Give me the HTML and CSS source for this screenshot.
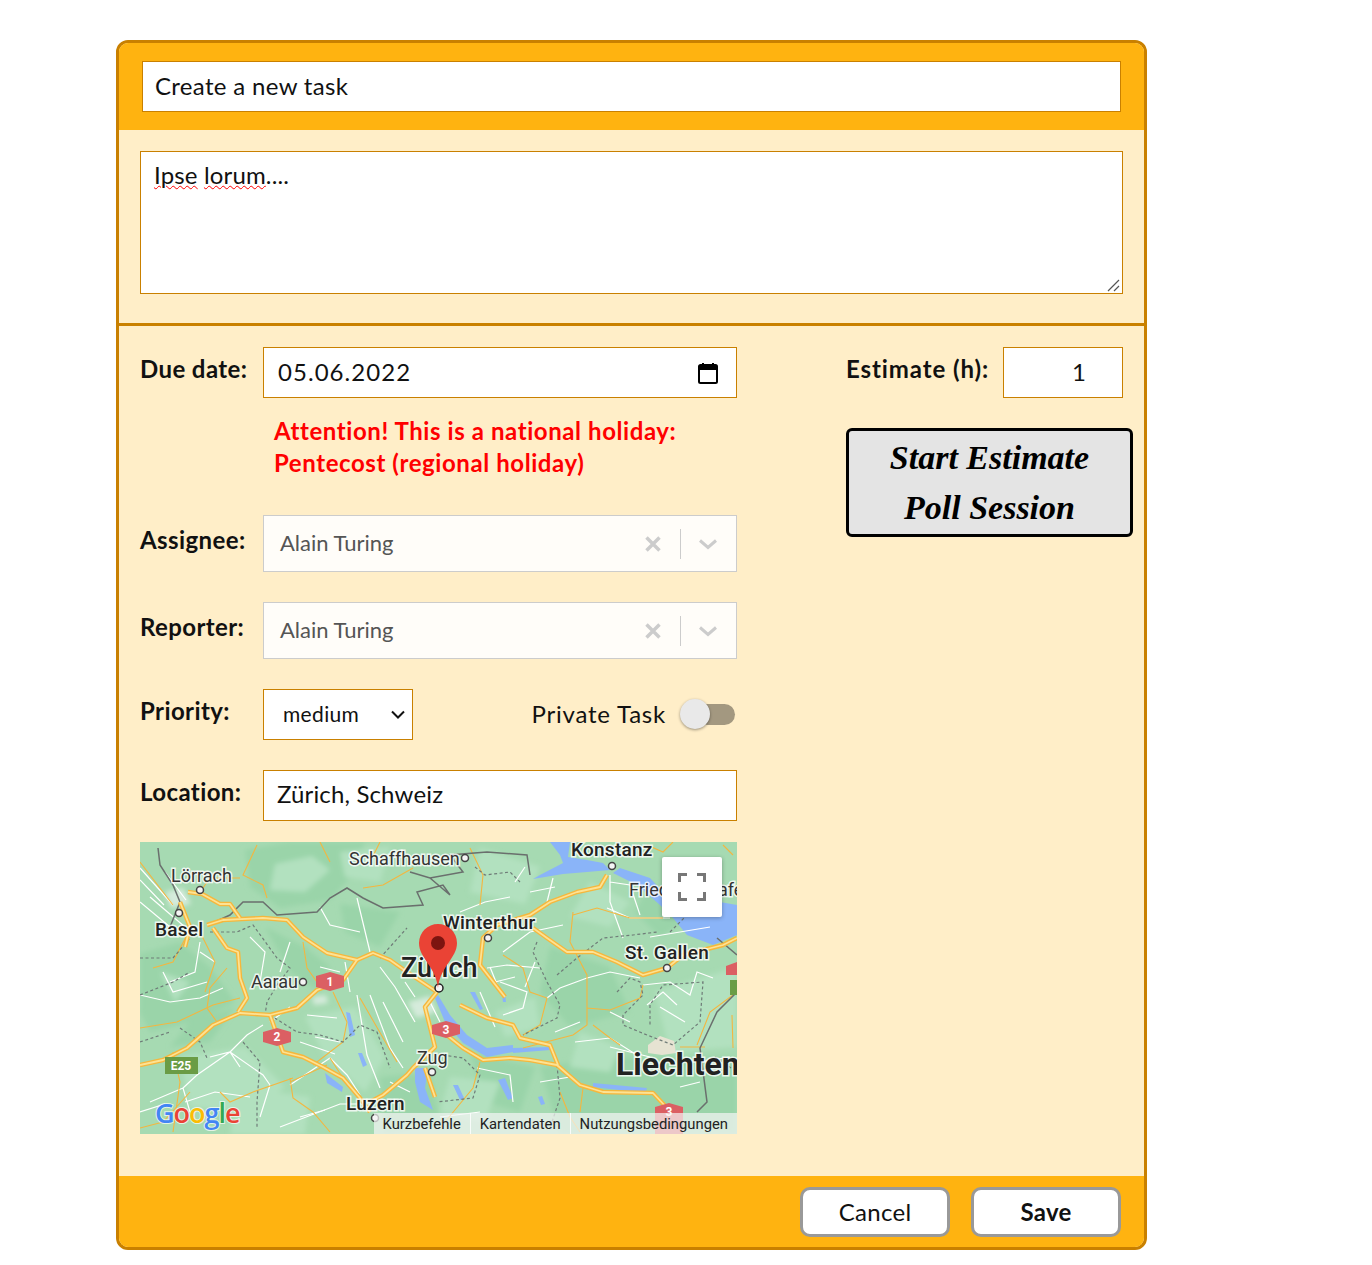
FILE: index.html
```html
<!DOCTYPE html>
<html lang="en">
<head>
    <meta charset="UTF-8">
    <title>Create a new task</title>
    <meta name="viewport" content="width=device-width, initial-scale=1.0">
    <link rel="stylesheet" href="styles.css">
</head>
<body>

    <form class="task-card">
        <header class="task-header">
            <input class="title-input" type="text" value="Create a new task">
        </header>

        <div class="description-section">
            <div class="description-box">
                <span class="misspelled">Ipse</span> <span class="misspelled">lorum</span>....
                <svg class="resize-handle" width="13" height="13" viewBox="0 0 13 13"><path d="M1 12L12 1M7 12l5-5" stroke="#555" stroke-width="1.200"/></svg>
            </div>
        </div>

        <div class="details-section">
            <div class="left-column">
                <div class="form-row">
                    <label class="field-label">Due date:</label>
                    <div class="text-box date-box">
                        <span class="date-value">05.06.2022</span>
                        <svg class="calendar-icon" width="20" height="22" viewBox="0 0 20 22">
                            <path d="M4 1h2v3H4zM14 1h2v3h-2z" fill="#000"/>
                            <path d="M2.500 3h15A1.500 1.500 0 0 1 19 4.500v15a1.500 1.500 0 0 1-1.500 1.500h-15A1.500 1.500 0 0 1 1 19.500v-15A1.500 1.500 0 0 1 2.500 3z" fill="none" stroke="#000" stroke-width="2"/>
                            <path d="M1 3h18v5H1z" fill="#000"/>
                        </svg>
                    </div>
                </div>

                <div class="holiday-alert">Attention! This is a national holiday:<br>Pentecost (regional holiday)</div>

                <div class="form-row person-row">
                    <label class="field-label">Assignee:</label>
                    <div class="person-select">
                        <span class="person-name">Alain Turing</span>
                        <svg class="clear-icon" width="16" height="16" viewBox="0 0 16 16"><path d="M1.500 1.500l13 13M14.500 1.500l-13 13" stroke="#ccc" stroke-width="3.500"/></svg>
                        <span class="select-divider"></span>
                        <svg class="chevron-icon" width="20" height="12" viewBox="0 0 20 12"><path d="M2 2.500l8 7 8-7" fill="none" stroke="#ccc" stroke-width="3"/></svg>
                    </div>
                </div>

                <div class="form-row person-row">
                    <label class="field-label">Reporter:</label>
                    <div class="person-select">
                        <span class="person-name">Alain Turing</span>
                        <svg class="clear-icon" width="16" height="16" viewBox="0 0 16 16"><path d="M1.500 1.500l13 13M14.500 1.500l-13 13" stroke="#ccc" stroke-width="3.500"/></svg>
                        <span class="select-divider"></span>
                        <svg class="chevron-icon" width="20" height="12" viewBox="0 0 20 12"><path d="M2 2.500l8 7 8-7" fill="none" stroke="#ccc" stroke-width="3"/></svg>
                    </div>
                </div>

                <div class="form-row">
                    <label class="field-label">Priority:</label>
                    <select class="priority-select">
                        <option>medium</option>
                        <option>low</option>
                        <option>high</option>
                    </select>
                    <div class="private-toggle">
                        <span class="private-label">Private Task</span>
                        <span class="toggle-track"><span class="toggle-thumb"></span></span>
                    </div>
                </div>

                <div class="form-row location-row">
                    <label class="field-label">Location:</label>
                    <input class="text-box location-input" type="text" value="Zürich, Schweiz">
                </div>

                <div class="map-box">
                    <svg class="map-canvas" width="597" height="292" viewBox="0 0 597 292">
                        <defs>
                            <filter id="soft"><feGaussianBlur stdDeviation="2.500"/></filter>
                        </defs>
                        <rect width="597" height="292" fill="#a6dab2"/>

                        <!-- terrain patches -->
                        <g filter="url(#soft)">
                            <g fill="#9ad4a9">
                                <path d="M105 8L150 0 225 0 215 30 190 58 140 66 110 45z"/>
                                <path d="M0 112L40 100 70 125 95 160 60 178 10 190 0 170z"/>
                                <path d="M125 85L165 105 190 125 180 150 150 130z"/>
                                <path d="M50 180L95 165 70 200 30 205z"/>
                                <path d="M410 105L470 125 490 170 430 185 400 150z"/>
                                <path d="M240 235L290 230 300 280 245 292z"/>
                                <path d="M400 225L470 215 597 215 597 292 420 292z"/>
                                <path d="M330 210L395 225 380 270 345 260z"/>
                                <path d="M200 62L260 70 240 105 205 90z"/>
                                <path d="M510 40L560 70 520 95 495 70z"/>
                            </g>
                            <g fill="#b2e1bf">
                                <path d="M135 22L172 14 190 28 165 50 130 48z"/>
                                <path d="M200 10L250 5 240 40 205 35z"/>
                                <path d="M40 215L105 205 145 245 110 270 50 265z"/>
                                <path d="M165 175L215 165 245 215 225 250 185 215z"/>
                                <path d="M515 150L597 125 597 205 530 210z"/>
                                <path d="M340 6L400 25 385 62 330 50z"/>
                                <path d="M355 170L395 155 400 185 365 195z"/>
                                <path d="M310 235L360 240 345 280 300 270z"/>
                                <path d="M440 190L480 205 470 230 430 225z"/>
                                <path d="M20 130L50 140 35 160z"/>
                                <path d="M100 245L170 255 165 292 90 292z"/>
                                <path d="M450 40L490 60 470 85 430 75z"/>
                            </g>
                        </g>
                        <path d="M508 203l12-9 14 5 2 12-14 2-14-2z" fill="#e6e3d2"/>
                        <g fill="#d5ebdb" filter="url(#soft)">
                            <path d="M25 50l18-4 8 16-20 4zM268 160l22-6 6 16-20 6zM172 155l14-2 2 8-14 2z"/>
                        </g>

                        <!-- lakes -->
                        <g fill="#8ab4f8">
                            <path d="M410 0L430 0 428 15 447 18 463 21 470 28 447 30 423 32 393 37 400 33 423 21 420 13z"/>
                            <path d="M480 26L510 36 523 50 597 63 597 93 573 103 547 93 533 76 520 63 497 43 473 31z"/>
                            <path d="M298 153L310 173 327 193 347 206 373 203 373 210 347 215 323 201 305 180 295 156z"/>
                            <path d="M330 150L335 150 343 167 340 168z"/>
                            <path d="M362 152L365 152 366 160 363 160z"/>
                            <path d="M275 226L288 226 285 246 293 268 280 260 275 240z"/>
                            <path d="M185 231L203 245 202 250 187 241z"/>
                            <path d="M206 170L210 171 215 193 210 195z"/>
                            <path d="M218 211L222 211 227 223 223 225z"/>
                            <path d="M358 238L365 236 373 256 368 258z"/>
                            <path d="M398 255L402 254 405 262 401 263z"/>
                            <path d="M453 241L507 246 505 251 453 245z"/>
                            <path d="M313 243L318 243 324 256 320 258z"/>
                            <path d="M373 206L410 205 410 208 373 211z"/>
                        </g>

                        <!-- minor roads -->
                        <g fill="none" stroke="#fff" stroke-width="1.200">
                            <path d="M0 26L33 63M0 38L24 63M0 60L30 85M10 55L45 85M25 30L46 58M180 65L190 83 220 90M217 56L230 110M0 153L30 160 60 156 83 146M23 130L33 150 67 140"/>
                            <path d="M90 210L57 233 43 246M90 210L123 233 130 243M90 210L107 193 123 183M70 215L90 210 100 225M190 216L207 233 220 253M217 153L227 213 240 246M230 153L250 206 263 226M243 160L263 200M167 173L197 176M160 200L195 212M150 243L190 216M60 110L75 120M10 260L43 246 50 270M130 243L120 275M140 285L200 262 230 262"/>
                            <path d="M413 36L407 60M470 40L490 43 500 73M470 33L470 60 483 96M363 110L390 90 423 83M360 140L387 150 383 166 363 173M407 156L420 146 447 136 470 130 500 136M347 126L367 123 400 126M503 143L530 140 550 153 557 130 573 136M507 163L523 150 537 163M337 226L370 233 373 260M467 66L490 76 530 76M340 150L355 185M350 125L360 150M375 40L385 25M395 120L385 145M530 126L545 110M300 180L290 160M435 200L470 196 500 215M540 245L560 240M300 275L340 270"/>
                            <path d="M60 100L55 130 30 140M110 95L125 110 120 140M150 100L140 130M180 125L200 130M240 125L255 145 275 180M205 120L210 150M265 140L275 155M130 180L150 165M175 195L200 200M45 260L75 250 110 255M160 275L185 268M250 240L270 250M0 270L25 262M310 130L330 125M320 70L345 60 370 55M390 50L415 45M355 140L375 135M415 190L440 180M510 95L540 90 570 85M470 170L490 180M520 165L545 180M400 240L430 235M470 205L510 215M560 220L590 215"/>
                        </g>
                        <g fill="none" stroke="#f4b63f" stroke-width="1.100">
                            <path d="M117 3L103 33 123 43 127 56M223 46L243 43 273 26M0 20L33 63M100 36L70 36 60 50M163 100L167 126 177 140M193 150L207 180 203 200 173 223M220 156L257 220M150 236L153 256 173 270 190 290M150 240L187 223M77 180L67 166 70 146 87 126M47 93L33 120 13 126M0 186L37 180 73 163 100 156M33 210L40 240 33 290M80 250L90 260 113 250 153 236M0 286L23 280 50 250M60 90L75 120 65 150M203 236L190 216M180 0L190 20M240 0L230 20"/>
                            <path d="M330 6L343 33 340 63M433 70L430 100 447 133 447 183 433 193 383 206M447 166L470 168 500 156 503 143M453 183L470 196 480 203M363 113L383 126 390 150 407 156 400 183 383 193M433 73L457 66 490 76 523 76M557 203L570 170 597 150M592 173L593 206M340 220L333 246 300 286M443 246L440 270M583 3L593 13M507 3L523 10 533 0M420 250L430 275 440 290M540 205L565 205"/>
                        </g>

                        <!-- canton borders -->
                        <g fill="none" stroke="#6f7c78" stroke-width="1.200" stroke-dasharray="3 2.500">
                            <path d="M0 116L33 116 50 96M70 90L97 90 113 83 137 116 150 126 137 143 127 160 125 173M40 186L60 200 67 216M130 173L157 190 180 193 203 200 220 183 237 190 250 226M103 200L120 220 117 260 117 286M240 116L267 86M0 153L33 140 50 130M0 200L30 190"/>
                            <path d="M397 100L393 110 407 140 420 163 417 176 383 193M417 133L437 116 463 96 493 93 517 90M477 150L490 136 500 140 503 153 483 173 483 183 507 193 533 203 560 180 563 140 523 143 510 163 510 183M303 213L323 216 340 233 333 256 297 260M417 223L420 256 410 286M335 25L345 33 370 30 380 40M530 90L545 75M575 215L597 230"/>
                        </g>

                        <!-- country borders -->
                        <g fill="none" stroke="#6a6f6d" stroke-width="1.500">
                            <path d="M18 6L20 23 33 43 40 60 30 85M68 83L90 73 103 60 123 60 137 73 177 70 190 56 207 46 223 56 243 66 283 63 277 50 303 43 310 53M270 30L290 36 323 30 310 13 347 10 387 13 390 33M290 36L310 53M577 96L597 113M597 150L577 170 560 206 567 260 557 270"/>
                        </g>

                        <!-- motorways -->
                        <g fill="none" stroke-linejoin="round">
                            <g stroke="#f6b73c" stroke-width="4.500">
                                <path id="road-a" d="M67 83L83 78 123 76 147 78 163 95 187 111 217 118 233 111 250 118 267 130 297 150"/>
                                <path id="road-b" d="M0 223L23 218 47 206 73 183 100 171 130 173 157 166 177 148 203 138 217 118"/>
                                <path id="road-c" d="M73 86L87 106 98 110 100 136 107 156 98 170"/>
                                <path id="road-d" d="M130 173L143 210 163 215 183 225 203 236 220 256 230 270"/>
                                <path id="road-e" d="M297 150L285 165 295 205 273 226 267 233 243 253 230 260M285 226L295 255"/>
                                <path id="road-f" d="M467 33L460 45 437 50 410 60 390 73 357 83 343 96 340 123 365 155"/>
                                <path id="road-g" d="M393 86L407 96 427 110 453 110 477 120 503 133 527 126 543 113 583 103 597 96"/>
                                <path id="road-h" d="M303 190L323 206 343 218 370 216 390 218 417 223 440 243 463 250 513 251 527 266"/>
                                <path id="road-i" d="M320 163L347 176 373 183 380 196 410 203 418 223"/>
                                <path id="road-j" d="M48 50L62 52 80 62 90 62 100 76"/>
                                <path id="road-k" d="M40 60L50 85 45 105"/>
                            </g>
                            <g stroke="#fde293" stroke-width="1.800">
                                <use href="#road-a"/><use href="#road-b"/><use href="#road-c"/><use href="#road-d"/><use href="#road-e"/><use href="#road-f"/><use href="#road-g"/><use href="#road-h"/><use href="#road-i"/><use href="#road-j"/><use href="#road-k"/>
                            </g>
                        </g>

                        <!-- route shields -->
                        <g fill="#db5f63">
                            <path d="M176 134L190 130 204 134 204 145 190 149 176 145z"/>
                            <path d="M123 190L137 186 151 190 151 200 137 204 123 200z"/>
                            <path d="M292 183L306 179 320 183 320 192 306 196 292 192z"/>
                            <path d="M515 265L529 261 543 265 543 292 515 292z"/>
                            <path d="M597 120L586 124 586 133 597 133z"/>
                        </g>
                        <g fill="#6a9c45">
                            <rect x="25" y="215" width="33" height="17"/>
                            <rect x="590" y="138" width="7" height="15"/>
                        </g>
                        <text class="shield-label" x="190" y="144">1</text>
                        <text class="shield-label" x="137" y="199">2</text>
                        <text class="shield-label" x="306" y="192">3</text>
                        <text class="shield-label" x="529" y="274">3</text>
                        <text class="shield-label" x="41" y="228">E25</text>

                        <!-- place markers -->
                        <g fill="#f4f4f4" stroke="#444" stroke-width="1.500">
                            <circle cx="60" cy="48" r="3.500"/>
                            <circle cx="39" cy="71" r="3.500"/>
                            <circle cx="163" cy="140" r="3.500"/>
                            <circle cx="325" cy="16" r="3.500"/>
                            <circle cx="472" cy="24" r="3.500"/>
                            <circle cx="348" cy="96" r="3.500"/>
                            <circle cx="527" cy="126" r="3.500"/>
                            <circle cx="292" cy="230" r="3.500"/>
                            <circle cx="235" cy="276" r="3.500"/>
                            <circle cx="299" cy="146" r="4" stroke="#222"/>
                        </g>

                        <!-- place names -->
                        <text class="place-small" x="31" y="40">Lörrach</text>
                        <text class="place-medium" x="15" y="94">Basel</text>
                        <text class="place-small" x="111" y="146">Aarau</text>
                        <text class="place-small" x="209" y="23">Schaffhausen</text>
                        <text class="place-medium" x="431" y="14">Konstanz</text>
                        <text class="place-small" x="489" y="54">Friedrichshafen</text>
                        <text class="place-medium" x="303" y="87">Winterthur</text>
                        <text class="place-medium" x="485" y="117">St. Gallen</text>
                        <text class="place-small" x="277" y="222">Zug</text>
                        <text class="place-medium" x="206" y="268">Luzern</text>
                        <text class="place-large" x="261" y="135">Zürich</text>
                        <text class="place-country" x="476" y="233">Liechtenstein</text>

                        <!-- marker pin -->
                        <path d="M298 146C296 125 279 116 279 101A19 19 0 0 1 317 101C317 116 300 125 298 146z" fill="#ea4335"/>
                        <circle cx="298" cy="101" r="7" fill="#7d1410"/>

                        <!-- logo -->
                        <text class="google-logo" x="15" y="281"><tspan fill="#4285f4">G</tspan><tspan fill="#ea4335">o</tspan><tspan fill="#fbbc04">o</tspan><tspan fill="#4285f4">g</tspan><tspan fill="#34a853">l</tspan><tspan fill="#ea4335">e</tspan></text>
                    </svg>

                    <button class="map-fullscreen" type="button">
                        <svg width="30" height="30" viewBox="0 0 30 30"><path d="M2.500 10V2.500H10M20 2.500h7.500V10M27.500 20v7.500H20M10 27.500H2.500V20" fill="none" stroke="#777" stroke-width="3"/></svg>
                    </button>

                    <div class="map-attribution">
                        <span>Kurzbefehle</span>
                        <span>Kartendaten</span>
                        <span>Nutzungsbedingungen</span>
                    </div>
                </div>
            </div>

            <div class="right-column">
                <div class="estimate-row">
                    <label class="field-label">Estimate (h):</label>
                    <input class="text-box estimate-input" type="text" value="1">
                </div>
                <button class="poll-button" type="button">Start Estimate<br>Poll Session</button>
            </div>
        </div>

        <footer class="task-footer">
            <button class="footer-button" type="button">Cancel</button>
            <button class="footer-button save-button" type="submit">Save</button>
        </footer>
    </form>

</body>
</html>
```

FILE: styles.css
```css
* {
    box-sizing: border-box;
}

body {
    font-family: 'Lato', sans-serif;
    margin: 0;
    padding: 40px 0 15px 116px;
    background-color: white;
    color: #111;
    font-size: 24px;
}

input, select, button {
    font-family: inherit;
    font-size: inherit;
    color: inherit;
}

.task-card {
    width: 1031px;
    height: 1210px;
    display: flex;
    flex-direction: column;
    border: 3px solid #c98000;
    border-radius: 12px;
    background-color: #ffeec8;
    overflow: hidden;
}

.task-header {
    height: 87px;
    padding: 18px 23px;
    background-color: #ffb310;
}

.title-input {
    display: block;
    width: 979px;
    height: 51px;
    padding: 0 12px 2px;
    background: white;
    border: 1px solid #c98000;
    border-radius: 0;
    letter-spacing: 0.33px;
}

.description-section {
    height: 196px;
    padding: 21px 21px 0;
    border-bottom: 3px solid #c98000;
}

.description-box {
    position: relative;
    width: 983px;
    height: 143px;
    padding: 7px 13px;
    line-height: 32px;
    background: white;
    border: 1px solid #c98000;
    letter-spacing: 0.15px;
}

.misspelled {
    text-decoration: underline wavy #f00 1px;
    text-underline-offset: 1px;
}

.resize-handle {
    position: absolute;
    right: 2px;
    bottom: 1px;
}

.details-section {
    flex: 1;
    display: flex;
    padding: 21px 0 0 21px;
}

.left-column {
    width: 597px;
}

.right-column {
    width: 287px;
    margin-left: 109px;
}

.form-row {
    display: flex;
    align-items: flex-start;
    margin-bottom: 30px;
}

.location-row {
    margin-bottom: 21px;
}

.field-label {
    width: 123px;
    flex: none;
    padding-top: 7px;
    line-height: 30px;
    font-weight: 700;
    letter-spacing: 0.4px;
}

.person-row .field-label {
    padding-top: 10px;
}

.text-box {
    height: 51px;
    background: white;
    border: 1px solid #c98000;
    border-radius: 0;
}

.date-box {
    width: 474px;
    display: flex;
    align-items: center;
    justify-content: space-between;
    padding: 0 18px 0 14px;
    letter-spacing: 1.05px;
}

.date-value {
    padding-bottom: 2px;
}

.holiday-alert {
    margin: -13px 0 36px 134px;
    line-height: 32px;
    color: #f00;
    font-weight: 700;
    letter-spacing: 0.58px;
}

.person-select {
    width: 474px;
    height: 57px;
    display: flex;
    align-items: center;
    padding: 0 18px 0 16px;
    background-color: #fffdf9;
    border: 1px solid #ccc;
}

.person-name {
    flex: 1;
    padding-bottom: 2px;
    font-size: 22px;
    color: #555;
}

.select-divider {
    width: 1px;
    height: 30px;
    margin: 0 17px 0 19px;
    background-color: #ccc;
}

.priority-select {
    appearance: none;
    width: 150px;
    height: 51px;
    padding: 0 0 2px 19px;
    background: white url("data:image/svg+xml,%3Csvg xmlns='http://www.w3.org/2000/svg' width='14' height='9' viewBox='0 0 14 9'%3E%3Cpath d='M1 1.500l6 6 6-6' fill='none' stroke='%23111' stroke-width='2'/%3E%3C/svg%3E") no-repeat right 7px center;
    border: 1px solid #c98000;
    border-radius: 0;
    font-size: 21px;
    letter-spacing: 0.35px;
}

.private-toggle {
    display: flex;
    align-items: center;
    margin-left: auto;
    padding-right: 2px;
    height: 51px;
}

.private-label {
    padding-bottom: 2px;
    letter-spacing: 0.78px;
}

.toggle-track {
    position: relative;
    width: 38px;
    height: 21px;
    margin-left: 31px;
    border-radius: 11px;
    background-color: #a39880;
}

.toggle-thumb {
    position: absolute;
    left: -17px;
    top: -5px;
    width: 30px;
    height: 30px;
    border-radius: 50%;
    background-color: #e9e9e9;
    box-shadow: 0 1px 3px rgba(0,0,0,0.4);
}

.location-input {
    width: 474px;
    padding: 0 13px 4px;
    letter-spacing: 0.15px;
}

.map-box {
    position: relative;
    width: 597px;
    height: 292px;
    overflow: hidden;
}

.map-canvas {
    display: block;
}

.map-canvas text {
    font-family: 'Roboto', sans-serif;
    fill: #222;
    stroke: rgba(255,255,255,0.8);
    stroke-width: 3px;
    paint-order: stroke;
}

.map-canvas .place-small {
    font-size: 18px;
    fill: #333;
}

.map-canvas .place-medium {
    font-size: 19px;
    font-weight: 500;
    letter-spacing: 0.25px;
}

.map-canvas .place-large {
    font-size: 27px;
    font-weight: 500;
}

.map-canvas .place-country {
    font-size: 32px;
    font-weight: 700;
}

.map-canvas .shield-label {
    font-size: 12px;
    font-weight: 700;
    fill: white;
    stroke: none;
    text-anchor: middle;
}

.map-canvas .google-logo {
    font-family: 'Open Sans', sans-serif;
    font-size: 27px;
    font-weight: 600;
    stroke: rgba(255,255,255,0.7);
    stroke-width: 2px;
    letter-spacing: -1px;
}

.map-fullscreen {
    position: absolute;
    top: 15px;
    right: 15px;
    width: 60px;
    height: 60px;
    padding: 0;
    display: flex;
    align-items: center;
    justify-content: center;
    background: white;
    border: none;
    border-radius: 2px;
    box-shadow: 0 1px 4px rgba(0,0,0,0.3);
}

.map-attribution {
    position: absolute;
    right: 0;
    bottom: 0;
    display: flex;
    height: 21px;
    align-items: center;
    background-color: rgba(245,245,245,0.7);
    font-family: 'Roboto', sans-serif;
    font-size: 14.8px;
    color: #222;
}

.map-attribution span {
    padding: 1px 9px 0;
    line-height: 20px;
    border-left: 1px solid rgba(255,255,255,0.8);
}

.map-attribution span:first-child {
    border-left: none;
}

.estimate-row {
    display: flex;
    align-items: flex-start;
    justify-content: space-between;
    width: 277px;
    margin-bottom: 30px;
}

.estimate-row .field-label {
    width: auto;
    letter-spacing: 0.9px;
}

.estimate-input {
    width: 120px;
    padding: 0 36px 2px 0;
    text-align: right;
}

.poll-button {
    display: block;
    width: 287px;
    height: 109px;
    padding: 0;
    background-color: #e4e4e4;
    border: 3px solid black;
    border-radius: 6px;
    font-family: 'Liberation Serif', serif;
    font-style: italic;
    font-weight: 700;
    font-size: 34px;
    line-height: 50px;
    color: black;
}

.task-footer {
    height: 71px;
    display: flex;
    justify-content: flex-end;
    gap: 21px;
    padding: 11px 23px 0 0;
    background-color: #ffb310;
}

.footer-button {
    width: 150px;
    height: 50px;
    padding: 0 0 2px;
    background: white;
    border: 3px solid #999;
    border-radius: 10px;
    letter-spacing: 0.3px;
}

.save-button {
    font-weight: 700;
}
```
